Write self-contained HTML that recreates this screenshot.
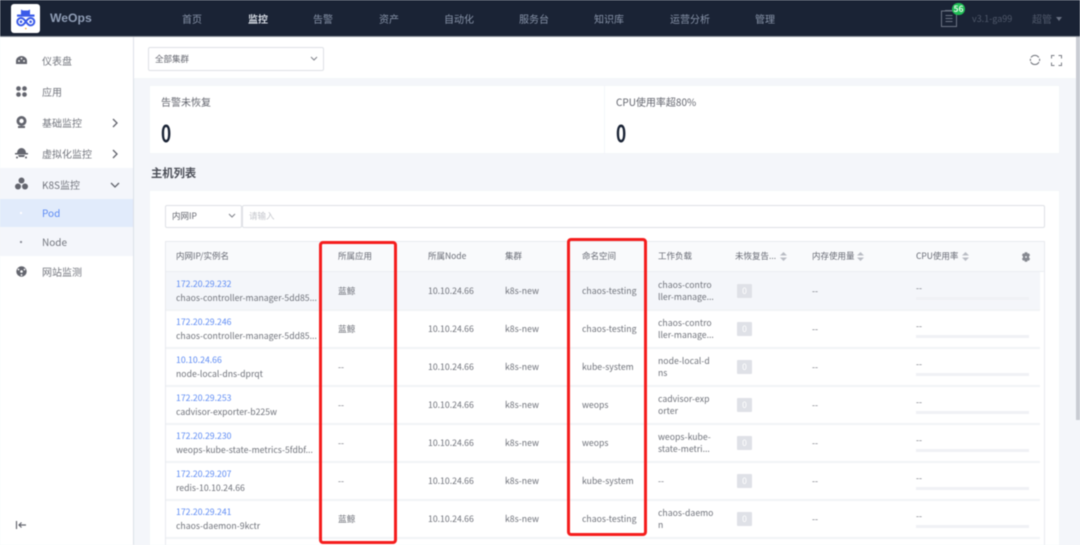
<!DOCTYPE html>
<html lang="zh-CN"><head><meta charset="utf-8"><title>WeOps</title>
<style>
*{box-sizing:border-box;margin:0;padding:0}
html,body{width:1080px;height:545px;overflow:hidden;background:#f4f6fa}
body{position:relative;font-family:"Noto Sans CJK SC","Liberation Sans",sans-serif;color:#63656e;font-size:10px}
#root{position:absolute;left:0;top:0;width:1080px;height:545px;overflow:hidden;filter:blur(.4px)}
.a{position:absolute;white-space:nowrap}
.hd{left:0;top:0;width:1080px;height:36px;background:#1a2335}
.nav{top:0;height:37px;line-height:37px;font-size:10px;color:#8793a8;transform:translateX(-50%)}
.side{left:0;top:37px;width:134px;height:508px;background:#fff;border-right:1px solid #dde0e8}
.mi{left:42px;font-size:10px;line-height:16px;color:#73767e}
.tb{font-size:8.7px;line-height:14px;color:#6f727a}
.th{font-size:8.5px;line-height:14px;color:#666973}
.lk{color:#5d8bf4}
.rowline{left:166px;width:874px;height:2px;background:#f2f3f6}
.zero{left:737px;width:15px;height:14px;background:#dfe1e7;color:#fff;border-radius:1px;text-align:center;line-height:14px;font-size:8.5px}
.bar{left:916px;width:113px;height:3px;background:#f0f1f5}
.sort{width:7px;height:9px}
.red{border:3px solid #f51d1d;border-radius:4px}
.big{font-size:23px;font-weight:700;line-height:28px;color:#1a2335;transform:scaleX(.75);transform-origin:0 50%}
</style></head><body><div id="root">

<div class="a hd"></div>
<div class="a" style="left:0;top:36px;width:1080px;height:1px;background:#8a8f99"></div>
<div class="a" style="left:11px;top:4px;width:29px;height:29px;background:#fff;border-radius:3px"></div>
<svg class="a" style="left:11px;top:4px" width="29" height="29" viewBox="0 0 29 29"><path d="M10 5.500l2 1h5l2-1V11H10z" fill="#3a5ae8"/><rect x="6" y="10.500" width="17.500" height="2.200" fill="#3a5ae8"/><path d="M14.800 17.500c-1.800-2.500-3-3.500-4.800-3.500a3.700 3.700 0 0 0 0 7.400c1.800 0 3-1 4.800-3.900c1.800-2.500 3-3.500 4.800-3.500a3.700 3.700 0 0 1 0 7.400c-1.800 0-3-1-4.800-3.900z" fill="none" stroke="#3a5ae8" stroke-width="2"/><circle cx="10" cy="17.700" r="1.300" fill="#3a5ae8"/><circle cx="19.600" cy="17.700" r="1.300" fill="#3a5ae8"/><circle cx="14.800" cy="24.500" r=".8" fill="#f0a030"/></svg>
<div class="a" style="left:50px;top:9px;font-family:'Liberation Sans',sans-serif;font-weight:700;font-size:12.200px;line-height:19px;color:#8f9db5">WeOps</div>
<div class="a nav" style="left:192px">首页</div>
<div class="a nav" style="left:258px;color:#d7dce5;font-weight:700">监控</div>
<div class="a nav" style="left:323px">告警</div>
<div class="a nav" style="left:389px">资产</div>
<div class="a nav" style="left:459px">自动化</div>
<div class="a nav" style="left:534px">服务台</div>
<div class="a nav" style="left:609px">知识库</div>
<div class="a nav" style="left:690px">运营分析</div>
<div class="a nav" style="left:765px">管理</div>
<svg class="a" style="left:940px;top:8px" width="20" height="20" viewBox="0 0 20 20" fill="none" stroke="#6c7484" stroke-width="1"><rect x="1.500" y="3" width="15" height="15.500"/><path d="M5 2.500h7M5.500 7.500h7M5.500 10.500h7M5.500 13.500h7"/></svg>
<div class="a" style="left:952px;top:3px;width:13px;height:12px;border-radius:6px;background:#1fbf55;color:#dff5e5;font-size:8.5px;font-weight:700;text-align:center;line-height:12px">56</div>
<div class="a" style="left:972px;top:10px;font-size:9px;line-height:18px;color:#4f586a">v3.1-ga99</div>
<div class="a" style="left:1032px;top:9px;font-size:10px;line-height:19px;color:#4f586a">超管</div>
<div class="a" style="left:1056px;top:17px;width:0;height:0;border:3px solid transparent;border-top:4px solid #687082"></div>

<div class="a side"></div>
<div class="a" style="left:0;top:168px;width:133px;height:88px;background:#f4f6fb"></div>
<div class="a" style="left:0;top:199px;width:133px;height:28px;background:#e1ebfb"></div>

<svg class="a" style="left:15px;top:54px" width="13" height="13" viewBox="0 0 13 13"><path d="M1 10V7a5.500 5 0 0 1 11 0v3z" fill="#63656e"/><circle cx="4" cy="7" r=".9" fill="#fff"/><circle cx="9" cy="7" r=".9" fill="#fff"/><circle cx="6.500" cy="4.500" r=".9" fill="#fff"/></svg>
<div class="a mi" style="top:53px">仪表盘</div>
<svg class="a" style="left:16px;top:86px" width="11" height="11" viewBox="0 0 11 11" fill="#63656e"><rect x=".2" y=".2" width="4.600" height="4.600" rx="2.200"/><rect x="6.200" y=".2" width="4.600" height="4.600" rx="2.200"/><rect x=".2" y="6.200" width="4.600" height="4.600" rx="2.200"/><rect x="6.200" y="6.200" width="4.600" height="4.600" rx="2.200"/></svg>
<div class="a mi" style="top:84px">应用</div>
<svg class="a" style="left:15px;top:115px" width="13" height="14" viewBox="0 0 13 14"><circle cx="6.500" cy="6" r="5" fill="#63656e"/><circle cx="6.500" cy="6" r="2.200" fill="#fff"/><rect x="3" y="11" width="7" height="2" fill="#63656e"/></svg>
<div class="a mi" style="top:115px">基础监控</div>
<svg class="a" style="left:111px;top:118px" width="8" height="10" viewBox="0 0 8 10" fill="none" stroke="#63656e" stroke-width="1.300"><path d="M2 1l4 4-4 4"/></svg>
<svg class="a" style="left:15px;top:146px" width="13" height="13" viewBox="0 0 13 13" fill="#63656e"><path d="M2 7a4.500 5 0 0 1 9 0z"/><rect x="0" y="7" width="13" height="1.500"/><path d="M3 9h7l-1 2H4z"/><circle cx="2" cy="11.500" r="1"/><circle cx="11" cy="11.500" r="1"/></svg>
<div class="a mi" style="top:146px">虚拟化监控</div>
<svg class="a" style="left:111px;top:149px" width="8" height="10" viewBox="0 0 8 10" fill="none" stroke="#63656e" stroke-width="1.300"><path d="M2 1l4 4-4 4"/></svg>
<svg class="a" style="left:15px;top:177px" width="13" height="13" viewBox="0 0 13 13" fill="#63656e"><circle cx="6.500" cy="3.500" r="3"/><circle cx="3" cy="9.500" r="3"/><circle cx="10" cy="9.500" r="3"/></svg>
<div class="a mi" style="top:177px">K8S监控</div>
<svg class="a" style="left:110px;top:181px" width="10" height="8" viewBox="0 0 10 8" fill="none" stroke="#63656e" stroke-width="1.300"><path d="M1 2l4 4 4-4"/></svg>
<div class="a" style="left:20px;top:212px;width:2px;height:2px;background:#fff"></div>
<div class="a mi" style="top:205px;color:#5d8bf4">Pod</div>
<div class="a" style="left:20px;top:241px;width:2px;height:2px;background:#8d9099"></div>
<div class="a mi" style="top:234px">Node</div>
<svg class="a" style="left:15px;top:265px" width="13" height="13" viewBox="0 0 13 13"><circle cx="6.500" cy="6.500" r="5.200" fill="#63656e"/><circle cx="6.500" cy="6.500" r="1.300" fill="#fff"/><circle cx="3.500" cy="4.500" r=".9" fill="#fff"/><circle cx="9.500" cy="4.500" r=".9" fill="#fff"/><circle cx="6.500" cy="10" r=".9" fill="#fff"/></svg>
<div class="a mi" style="top:264px">网站监测</div>
<svg class="a" style="left:15px;top:520px" width="12" height="10" viewBox="0 0 12 10" fill="none" stroke="#63656e" stroke-width="1.200"><path d="M1.500 1v8M11 5H4M6.500 2.500L4 5l2.500 2.500"/></svg>

<div class="a" style="left:134px;top:37px;width:946px;height:41px;background:#fff"></div>
<div class="a" style="left:148px;top:47px;width:176px;height:24px;background:#fff;border:1px solid #dfe1e6;border-radius:2px;padding-left:6px;line-height:22px;font-size:8.5px;color:#63656e">全部集群</div>
<svg class="a" style="left:310px;top:56px" width="8" height="6" viewBox="0 0 8 6" fill="none" stroke="#80838b" stroke-width="1"><path d="M1 1l3 3 3-3"/></svg>
<svg class="a" style="left:1029px;top:54px" width="12" height="12" viewBox="0 0 12 12" fill="none" stroke="#6d7078" stroke-width="1"><path d="M9.800 3.500A4.600 4.600 0 0 0 2 3.500M1.800 8A4.600 4.600 0 0 0 10 8M1.500 4.800A4.600 4.600 0 0 0 1.500 7M10.500 4.800A4.600 4.600 0 0 1 10.500 7"/></svg>
<svg class="a" style="left:1050px;top:54px" width="13" height="13" viewBox="0 0 13 13" fill="none" stroke="#7b7e86" stroke-width="1"><path d="M1.500 4.500v-3h3M8.500 1.500h3v3M11.500 8.500v3h-3M4.500 11.500h-3v-3"/></svg>
<div class="a" style="left:1076px;top:37px;width:4px;height:383px;background:#c9ccd3"></div>

<div class="a" style="left:150px;top:86px;width:454px;height:67px;background:#fff"></div>
<div class="a" style="left:605px;top:86px;width:454px;height:67px;background:#fff"></div>
<div class="a" style="left:161px;top:93px;font-size:10px;line-height:17px;color:#63656e">告警未恢复</div>
<div class="a big" style="left:161px;top:118px">0</div>
<div class="a" style="left:616px;top:93px;font-size:10px;line-height:17px;color:#63656e">CPU使用率超80%</div>
<div class="a big" style="left:616px;top:118px">0</div>
<div class="a" style="left:151px;top:164px;font-size:11.3px;font-weight:700;line-height:18px;color:#4b4e57">主机列表</div>

<div class="a" style="left:150px;top:191px;width:909px;height:354px;background:#fff"></div>
<div class="a" style="left:165px;top:205px;width:77px;height:23px;border:1px solid #dfe1e6;border-radius:2px;padding-left:6px;line-height:21px;font-size:8.5px;color:#63656e">内网IP</div>
<svg class="a" style="left:228px;top:213px" width="8" height="6" viewBox="0 0 8 6" fill="none" stroke="#80838b" stroke-width="1"><path d="M1 1l3 3 3-3"/></svg>
<div class="a" style="left:242px;top:205px;width:803px;height:23px;border:1px solid #dfe1e6;border-radius:2px;padding-left:6px;line-height:21px;font-size:8.5px;color:#c4c6cc">请输入</div>

<div class="a" style="left:165px;top:241px;width:880px;height:304px;border:1px solid #e8eaef;border-bottom:0"></div>
<div class="a" style="left:166px;top:242px;width:878px;height:30px;background:#f9fafc;border-bottom:1px solid #eceef2"></div>
<div class="a" style="left:166px;top:272px;width:874px;height:38px;background:#f4f6fa"></div>
<div class="a rowline" style="top:309px"></div>
<div class="a rowline" style="top:347px"></div>
<div class="a rowline" style="top:385px"></div>
<div class="a rowline" style="top:423px"></div>
<div class="a rowline" style="top:461px"></div>
<div class="a rowline" style="top:499px"></div>
<div class="a rowline" style="top:537px"></div>

<div class="a th" style="left:176px;top:249px">内网IP/实例名</div>
<div class="a th" style="left:338px;top:249px">所属应用</div>
<div class="a th" style="left:428px;top:249px">所属Node</div>
<div class="a th" style="left:505px;top:249px">集群</div>
<div class="a th" style="left:582px;top:249px">命名空间</div>
<div class="a th" style="left:658px;top:249px">工作负载</div>
<div class="a th" style="left:735px;top:249px">未恢复告...</div>
<div class="a th" style="left:812px;top:249px">内存使用量</div>
<div class="a th" style="left:916px;top:249px">CPU使用率</div>
<svg class="a sort" style="left:780px;top:252px" viewBox="0 0 7 9" fill="#b9bcc4"><path d="M3.500 0L7 3.500H0zM3.500 9L0 5.500h7z"/></svg>
<svg class="a sort" style="left:857px;top:252px" viewBox="0 0 7 9" fill="#b9bcc4"><path d="M3.500 0L7 3.500H0zM3.500 9L0 5.500h7z"/></svg>
<svg class="a sort" style="left:962px;top:252px" viewBox="0 0 7 9" fill="#b9bcc4"><path d="M3.500 0L7 3.500H0zM3.500 9L0 5.500h7z"/></svg>
<svg class="a" style="left:1021px;top:252px" width="10" height="10" viewBox="0 0 10 10"><path d="M3.800.3h2.400l.4 1.300 1.300-.4 1.200 2-1 .9v1.800l1 .9-1.200 2-1.300-.4-.4 1.300H3.800l-.4-1.300-1.300.4-1.200-2 1-.9V4.100l-1-.9 1.200-2 1.300.4z" fill="#868991"/><circle cx="5" cy="5" r=".9" fill="#f9fafc"/></svg>

<!-- row 1 -->
<div class="a tb lk" style="left:176px;top:277px">172.20.29.232</div>
<div class="a tb" style="left:176px;top:291px">chaos-controller-manager-5dd85...</div>
<div class="a tb" style="left:338px;top:284px">蓝鲸</div>
<div class="a tb" style="left:428px;top:284px">10.10.24.66</div>
<div class="a tb" style="left:505px;top:284px">k8s-new</div>
<div class="a tb" style="left:582px;top:284px">chaos-testing</div>
<div class="a tb" style="left:658px;top:278px">chaos-contro</div>
<div class="a tb" style="left:658px;top:290px">ller-manage...</div>
<div class="a zero" style="top:284px">0</div>
<div class="a tb" style="left:812px;top:284px">--</div>
<div class="a tb" style="left:916px;top:281px">--</div>
<div class="a bar" style="top:297px"></div>
<!-- row 2 -->
<div class="a tb lk" style="left:176px;top:315px">172.20.29.246</div>
<div class="a tb" style="left:176px;top:329px">chaos-controller-manager-5dd85...</div>
<div class="a tb" style="left:338px;top:322px">蓝鲸</div>
<div class="a tb" style="left:428px;top:322px">10.10.24.66</div>
<div class="a tb" style="left:505px;top:322px">k8s-new</div>
<div class="a tb" style="left:582px;top:322px">chaos-testing</div>
<div class="a tb" style="left:658px;top:316px">chaos-contro</div>
<div class="a tb" style="left:658px;top:328px">ller-manage...</div>
<div class="a zero" style="top:322px">0</div>
<div class="a tb" style="left:812px;top:322px">--</div>
<div class="a tb" style="left:916px;top:319px">--</div>
<div class="a bar" style="top:335px"></div>
<!-- row 3 -->
<div class="a tb lk" style="left:176px;top:353px">10.10.24.66</div>
<div class="a tb" style="left:176px;top:367px">node-local-dns-dprqt</div>
<div class="a tb" style="left:338px;top:360px">--</div>
<div class="a tb" style="left:428px;top:360px">10.10.24.66</div>
<div class="a tb" style="left:505px;top:360px">k8s-new</div>
<div class="a tb" style="left:582px;top:360px">kube-system</div>
<div class="a tb" style="left:658px;top:354px">node-local-d</div>
<div class="a tb" style="left:658px;top:366px">ns</div>
<div class="a zero" style="top:360px">0</div>
<div class="a tb" style="left:812px;top:360px">--</div>
<div class="a tb" style="left:916px;top:357px">--</div>
<div class="a bar" style="top:373px"></div>
<!-- row 4 -->
<div class="a tb lk" style="left:176px;top:391px">172.20.29.253</div>
<div class="a tb" style="left:176px;top:405px">cadvisor-exporter-b225w</div>
<div class="a tb" style="left:338px;top:398px">--</div>
<div class="a tb" style="left:428px;top:398px">10.10.24.66</div>
<div class="a tb" style="left:505px;top:398px">k8s-new</div>
<div class="a tb" style="left:582px;top:398px">weops</div>
<div class="a tb" style="left:658px;top:392px">cadvisor-exp</div>
<div class="a tb" style="left:658px;top:404px">orter</div>
<div class="a zero" style="top:398px">0</div>
<div class="a tb" style="left:812px;top:398px">--</div>
<div class="a tb" style="left:916px;top:395px">--</div>
<div class="a bar" style="top:411px"></div>
<!-- row 5 -->
<div class="a tb lk" style="left:176px;top:429px">172.20.29.230</div>
<div class="a tb" style="left:176px;top:443px">weops-kube-state-metrics-5fdbf...</div>
<div class="a tb" style="left:338px;top:436px">--</div>
<div class="a tb" style="left:428px;top:436px">10.10.24.66</div>
<div class="a tb" style="left:505px;top:436px">k8s-new</div>
<div class="a tb" style="left:582px;top:436px">weops</div>
<div class="a tb" style="left:658px;top:430px">weops-kube-</div>
<div class="a tb" style="left:658px;top:442px">state-metri...</div>
<div class="a zero" style="top:436px">0</div>
<div class="a tb" style="left:812px;top:436px">--</div>
<div class="a tb" style="left:916px;top:433px">--</div>
<div class="a bar" style="top:449px"></div>
<!-- row 6 -->
<div class="a tb lk" style="left:176px;top:467px">172.20.29.207</div>
<div class="a tb" style="left:176px;top:481px">redis-10.10.24.66</div>
<div class="a tb" style="left:338px;top:474px">--</div>
<div class="a tb" style="left:428px;top:474px">10.10.24.66</div>
<div class="a tb" style="left:505px;top:474px">k8s-new</div>
<div class="a tb" style="left:582px;top:474px">kube-system</div>
<div class="a tb" style="left:658px;top:474px">--</div>
<div class="a zero" style="top:474px">0</div>
<div class="a tb" style="left:812px;top:474px">--</div>
<div class="a tb" style="left:916px;top:471px">--</div>
<div class="a bar" style="top:487px"></div>
<!-- row 7 -->
<div class="a tb lk" style="left:176px;top:505px">172.20.29.241</div>
<div class="a tb" style="left:176px;top:519px">chaos-daemon-9kctr</div>
<div class="a tb" style="left:338px;top:512px">蓝鲸</div>
<div class="a tb" style="left:428px;top:512px">10.10.24.66</div>
<div class="a tb" style="left:505px;top:512px">k8s-new</div>
<div class="a tb" style="left:582px;top:512px">chaos-testing</div>
<div class="a tb" style="left:658px;top:506px">chaos-daemo</div>
<div class="a tb" style="left:658px;top:518px">n</div>
<div class="a zero" style="top:512px">0</div>
<div class="a tb" style="left:812px;top:512px">--</div>
<div class="a tb" style="left:916px;top:509px">--</div>
<div class="a bar" style="top:525px"></div>

<div class="a red" style="left:319px;top:241px;width:78px;height:303px"></div>
<div class="a red" style="left:567px;top:238px;width:80px;height:298px"></div>
</div></body></html>
